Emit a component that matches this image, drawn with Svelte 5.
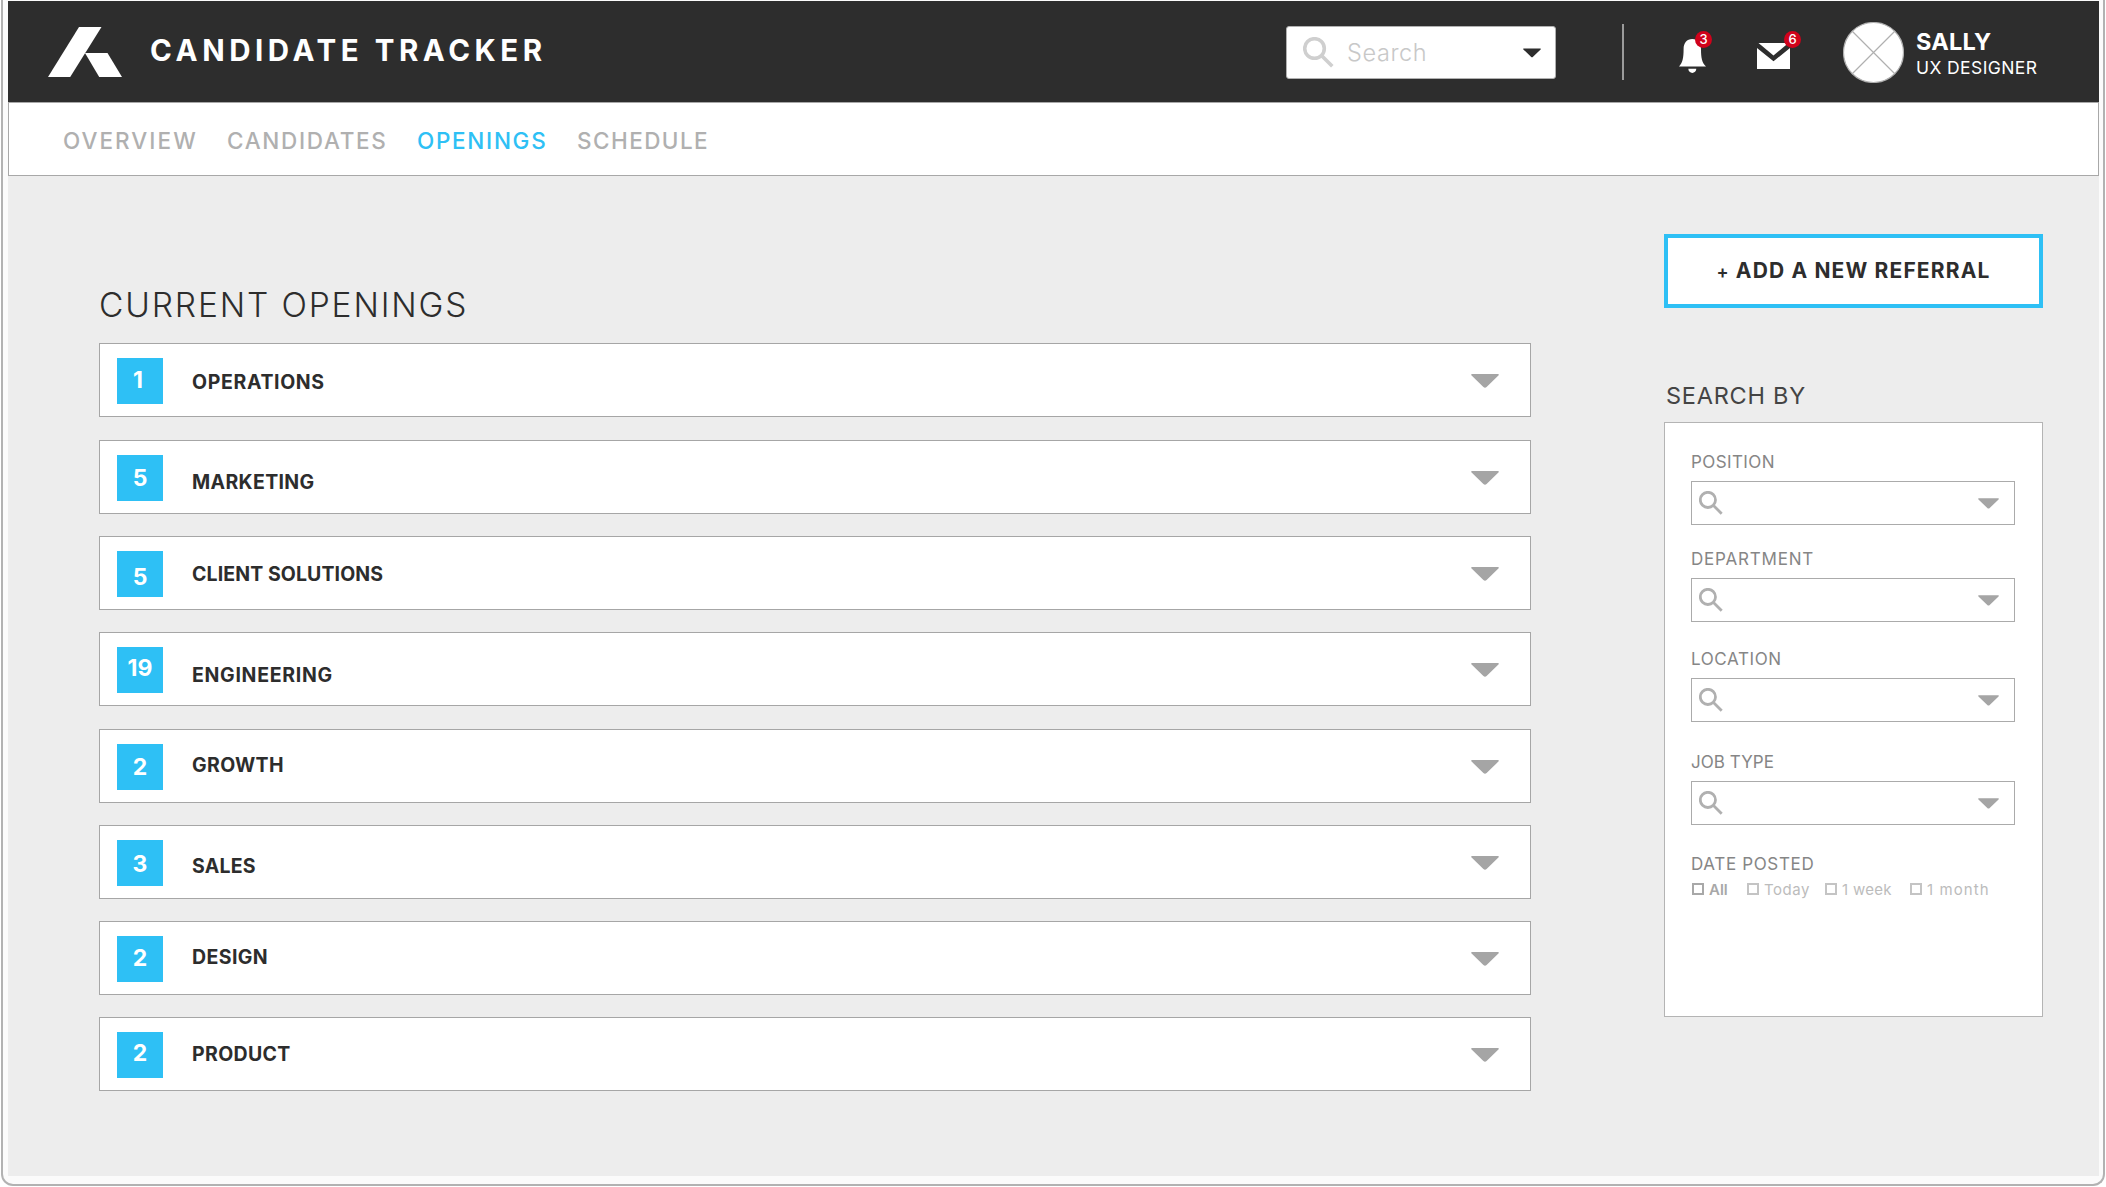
<script lang="ts">
	interface Opening {
		name: string;
		count: number;
		countShift: number;
		nameShift: number;
		spacing: number;
	}

	const tabs = [
		{ label: 'OVERVIEW', width: 164, spacing: 2.05 },
		{ label: 'CANDIDATES', width: 190, spacing: 1.7 },
		{ label: 'OPENINGS', width: 160, spacing: 1.7 },
		{ label: 'SCHEDULE', width: 160, spacing: 1.45 }
	];

	const openings: Opening[] = [
		{ name: 'OPERATIONS', count: 1, countShift: -1, nameShift: 1, spacing: 0.65 },
		{ name: 'MARKETING', count: 5, countShift: 0, nameShift: 4, spacing: 0.35 },
		{ name: 'CLIENT SOLUTIONS', count: 5, countShift: 3, nameShift: 0, spacing: 0.1 },
		{ name: 'ENGINEERING', count: 19, countShift: -2, nameShift: 5, spacing: 0.7 },
		{ name: 'GROWTH', count: 2, countShift: 0, nameShift: -2, spacing: 0.35 },
		{ name: 'SALES', count: 3, countShift: 1, nameShift: 3, spacing: 0.2 },
		{ name: 'DESIGN', count: 2, countShift: -1, nameShift: -2, spacing: 0.4 },
		{ name: 'PRODUCT', count: 2, countShift: -2, nameShift: -1, spacing: 0.35 }
	];

	const filters = [
		{ label: 'POSITION', height: 97, spacing: 0.4 },
		{ label: 'DEPARTMENT', height: 100, spacing: 0.8 },
		{ label: 'LOCATION', height: 103, spacing: 0.6 },
		{ label: 'JOB TYPE', height: 102, spacing: 0.05 }
	];

	const dates = [
		{ label: 'All', width: 55, spacing: 0 },
		{ label: 'Today', width: 78, spacing: 0.5 },
		{ label: '1 week', width: 85, spacing: 0.3 },
		{ label: '1 month', width: 90, spacing: 1.1 }
	];

	let activeTab = $state('OPENINGS');
	let activeDate = $state('All');
</script>

{#snippet magnifier()}
	<svg class="magnifier" viewBox="0 0 31 31">
		<circle cx="11.5" cy="11.5" r="9.8" />
		<path d="M18.7 18.7 L29.3 29.3" />
	</svg>
{/snippet}

{#snippet caret()}
	<svg class="caret" viewBox="0 0 28 14">
		<path d="M1 0 H27 Q28.4 .4 27.4 1.6 L15.6 13 Q14 14.6 12.4 13 L.6 1.6 Q-.4 .4 1 0 Z" />
	</svg>
{/snippet}

<div class="frame">
	<header>
		<svg class="logo" viewBox="0 0 74 50">
			<path d="M31 0 H53.5 L22.2 50 H0 Z" />
			<path d="M37 26 H59.5 L74 50 H51.2 Z" />
		</svg>
		<h1>CANDIDATE TRACKER</h1>

		<div class="search">
			{@render magnifier()}
			<span>Search</span>
			{@render caret()}
		</div>
		<div class="divider"></div>

		<div class="alert bell">
			<svg viewBox="0 0 27 34">
				<path d="M13.3 0 C18.8 0 22 4 22 10 C22 19 23 24 27 27.5 H0 C3.6 24 4.6 19 4.6 10 C4.6 4 7.8 0 13.3 0 Z" />
				<path d="M9.3 29.8 H17.3 C17.3 35.3 9.3 35.3 9.3 29.8 Z" />
			</svg>
			<b class="badge">3</b>
		</div>
		<div class="alert mail">
			<svg viewBox="0 0 33 26">
				<path d="M1.5 0 H31.5 L16.5 12.5 Z" />
				<path d="M0 5 L16.5 18.3 L33 5 V26 H0 Z" />
			</svg>
			<b class="badge">6</b>
		</div>

		<svg class="avatar" viewBox="0 0 61 61">
			<circle cx="30.5" cy="30.5" r="30" />
			<path d="M9.5 9.5 L51.5 51.5 M51.5 9.5 L9.5 51.5" />
		</svg>
		<div class="user">
			<strong>SALLY</strong>
			<span>UX DESIGNER</span>
		</div>
	</header>

	<nav>
		{#each tabs as tab}
			<button
				class:active={tab.label === activeTab}
				style:width="{tab.width}px"
				style:letter-spacing="{tab.spacing}px"
				onclick={() => (activeTab = tab.label)}
			>
				{tab.label}
			</button>
		{/each}
	</nav>

	<main>
		<section>
			<h2>CURRENT OPENINGS</h2>
			<div class="openings">
				{#each openings as opening}
					<div class="opening">
						<div class="count">
							<span style:transform="translateY({opening.countShift}px)">{opening.count}</span>
						</div>
						<span
							class="name"
							style:transform="translateY({opening.nameShift}px)"
							style:letter-spacing="{opening.spacing}px">{opening.name}</span
						>
						{@render caret()}
					</div>
				{/each}
			</div>
		</section>

		<aside>
			<button class="referral"><small>+</small> ADD A NEW REFERRAL</button>
			<h3>SEARCH BY</h3>
			<div class="filters">
				{#each filters as filter}
					<div class="filter" style:height="{filter.height}px">
						<span class="label" style:letter-spacing="{filter.spacing}px">{filter.label}</span>
						<div class="field">
							{@render magnifier()}
							{@render caret()}
						</div>
					</div>
				{/each}
				<span class="label posted">DATE POSTED</span>
				<div class="dates">
					{#each dates as date}
						<button
							class="date"
							class:active={date.label === activeDate}
							style:width="{date.width}px"
							style:letter-spacing="{date.spacing}px"
							onclick={() => (activeDate = date.label)}
						>
							<i></i>{date.label}
						</button>
					{/each}
				</div>
			</div>
		</aside>
	</main>
</div>

<style>
	:global(body) {
		margin: 0;
		background: #fff;
		overflow: hidden;
	}

	.frame {
		box-sizing: border-box;
		width: 2104px;
		height: 1186px;
		margin: 0 1px;
		padding: 1px 4px 8px 5px;
		border: solid #b2b2b2;
		border-width: 0 2px 2px;
		border-radius: 0 0 12px 12px;
		background: #fbfbfb;
		font-family: Inter, 'Open Sans', sans-serif;
		color: #2d2d2d;
		display: flex;
		flex-direction: column;
	}

	button {
		font-family: inherit;
		padding: 0;
		border: none;
		background: none;
		text-align: left;
		white-space: nowrap;
		cursor: pointer;
	}

	header {
		display: flex;
		align-items: center;
		height: 101px;
		box-sizing: border-box;
		padding-left: 40px;
		background: #2d2d2d;
		color: #fff;
	}

	.logo {
		width: 74px;
		height: 50px;
		fill: #fff;
	}

	h1 {
		margin: 0 0 3px 28px;
		font-size: 29.5px;
		font-weight: 700;
		line-height: 40px;
		letter-spacing: 4.55px;
		white-space: nowrap;
	}

	.magnifier {
		width: 31px;
		height: 31px;
		fill: none;
		stroke: #cfcfcf;
		stroke-width: 3.6;
	}

	.caret {
		width: 28px;
		height: 14px;
		margin-left: auto;
		fill: #a5a5a5;
	}

	.search {
		display: flex;
		align-items: center;
		box-sizing: border-box;
		width: 270px;
		height: 53px;
		margin: 2px 0 0 auto;
		padding: 0 15px 0 16px;
		border: 1px solid #b0b0b0;
		border-radius: 3px;
		background: #fff;
	}

	.search span {
		margin-left: 13px;
		font-size: 23.5px;
		font-weight: 300;
		line-height: 30px;
		letter-spacing: 0.6px;
		color: #c8c8c8;
	}

	.search .caret {
		width: 18px;
		height: 10px;
		margin-right: -1px;
		fill: #2d2d2d;
	}

	.divider {
		width: 2px;
		height: 56px;
		margin-left: 66px;
		background: #9b9b9b;
	}

	.alert {
		position: relative;
		display: flex;
		fill: #fff;
	}

	.bell {
		width: 27px;
		height: 34px;
		margin: 9px 0 0 55px;
	}

	.mail {
		width: 33px;
		height: 26px;
		margin: 9px 0 0 51px;
	}

	.badge {
		position: absolute;
		top: -8px;
		left: 16px;
		width: 17px;
		height: 17px;
		border-radius: 50%;
		background: #d0021b;
		font-size: 13px;
		font-weight: 500;
		line-height: 17px;
		text-align: center;
	}

	.mail .badge {
		top: -12px;
		left: 27px;
	}

	.avatar {
		width: 61px;
		height: 61px;
		margin: 2px 0 0 53px;
		fill: #fff;
		stroke: #b0b0b0;
		stroke-width: 1.2;
	}

	.user {
		display: flex;
		flex-direction: column;
		width: 183px;
		margin: 5px 0 0 12px;
	}

	.user strong {
		font-size: 23.5px;
		font-weight: 700;
		line-height: 27px;
		letter-spacing: 0.2px;
	}

	.user span {
		font-size: 17.5px;
		line-height: 26px;
		letter-spacing: 0.4px;
	}

	nav {
		display: flex;
		align-items: center;
		box-sizing: border-box;
		height: 74px;
		padding: 2px 0 0 54px;
		border: 1px solid #a8a8a8;
		background: #fff;
	}

	nav button {
		font-size: 22.5px;
		font-weight: 500;
		color: #b0b0b0;
	}

	nav button.active {
		color: #2ec0f5;
	}

	main {
		flex: 1;
		display: flex;
		justify-content: space-between;
		padding: 58px 56px 0 91px;
		background: #ededed;
	}

	h2 {
		margin: 51px 0 18.35px 0;
		font-size: 33.5px;
		font-weight: 350;
		line-height: 40px;
		letter-spacing: 1.85px;
	}

	.openings {
		display: flex;
		flex-direction: column;
		gap: 22.3px;
	}

	.opening {
		display: flex;
		align-items: center;
		box-sizing: border-box;
		width: 1432px;
		height: 74px;
		padding: 2px 31px 0 17px;
		border: 1px solid #a6a6a6;
		background: #fff;
	}

	.count {
		display: grid;
		place-items: center;
		width: 46px;
		height: 46px;
		background: #2ec0f5;
		color: #fff;
		font-size: 23px;
		font-weight: 700;
	}

	.opening:first-child .count {
		box-sizing: border-box;
		padding-right: 4px;
	}

	.name {
		margin-left: 29px;
		font-size: 19.5px;
		font-weight: 700;
	}

	aside {
		width: 379px;
	}

	.referral {
		box-sizing: border-box;
		width: 100%;
		height: 74px;
		padding-bottom: 2px;
		border: 4px solid #2ec0f5;
		background: #fff;
		color: #2d2d2d;
		font-size: 21px;
		font-weight: 700;
		letter-spacing: 1.15px;
		text-align: center;
	}

	.referral small {
		font-size: 18px;
		font-weight: 600;
	}

	h3 {
		margin: 73px 0 11px 2px;
		font-size: 23.5px;
		font-weight: 400;
		line-height: 30px;
		letter-spacing: 0.75px;
		color: #444;
	}

	.filters {
		box-sizing: border-box;
		height: 595px;
		padding: 28px 27px 0 26px;
		border: 1px solid #b4b4b4;
		background: #fff;
	}

	.label {
		display: block;
		font-size: 17px;
		line-height: 22px;
		color: #868686;
	}

	.posted {
		letter-spacing: 0.65px;
	}

	.field {
		display: flex;
		align-items: center;
		box-sizing: border-box;
		height: 44px;
		margin-top: 8px;
		padding: 0 15px 0 7px;
		border: 1px solid #ababab;
	}

	.field .magnifier {
		width: 24px;
		height: 24px;
		stroke: #b0b0b0;
	}

	.field .caret {
		width: 21px;
		height: 11px;
	}

	.dates {
		display: flex;
		margin-top: 3px;
	}

	.date {
		display: flex;
		align-items: center;
		height: 22px;
		font-size: 15px;
		color: #bcbcbc;
	}

	.date i {
		box-sizing: border-box;
		width: 12px;
		height: 12px;
		margin: 0 5px 0 1px;
		border: 2px solid #c4c4c4;
	}

	.date.active {
		font-weight: 600;
		color: #a8a8a8;
	}

	.date.active i {
		border-color: #a8a8a8;
	}
</style>
